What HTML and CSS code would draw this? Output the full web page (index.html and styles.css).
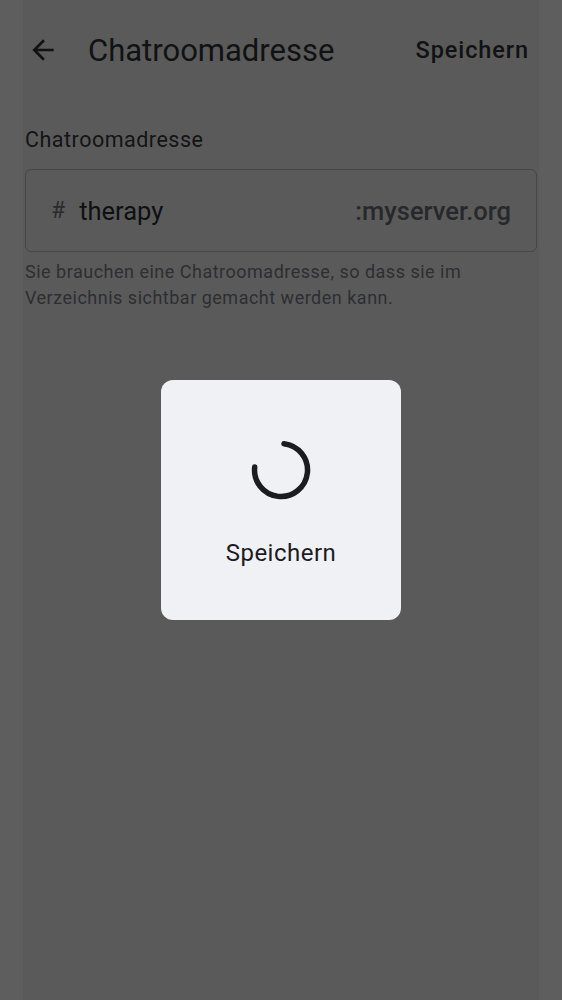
FILE: index.html
```html
<!DOCTYPE html>
<html lang="de">
<head>
<meta charset="utf-8">
<title>Chatroomadresse</title>
<link rel="stylesheet" href="styles.css">
</head>
<body>
<div class="screen">
  <header class="topbar">
    <button class="back" aria-label="Zurück">
      <svg width="32" height="32" viewBox="0 0 24 24"><path d="M20 11H7.83l5.59-5.59L12 4l-8 8 8 8 1.41-1.41L7.83 13H20v-2z" fill="#111214"/></svg>
    </button>
    <h1 class="title">Chatroomadresse</h1>
    <span class="save">Speichern</span>
  </header>
  <main class="content">
    <label class="label">Chatroomadresse</label>
    <div class="field">
      <span class="hash">#</span>
      <span class="value">therapy</span>
      <span class="suffix">:myserver.org</span>
    </div>
    <p class="helper">Sie brauchen eine Chatroomadresse, so dass sie im Verzeichnis sichtbar gemacht werden kann.</p>
  </main>
  <div class="dialog">
    <svg class="spinner" width="66" height="66" viewBox="0 0 66 66">
      <path d="M36 6.7 A26.5 26.5 0 1 1 6.7 30" fill="none" stroke="#1b1c1f" stroke-width="5.5" stroke-linecap="round"/>
    </svg>
    <div class="dialog-text">Speichern</div>
  </div>
</div>
</body>
</html>
```
FILE: styles.css
```css
html, body {
  margin: 0;
  padding: 0;
}
body {
  background: linear-gradient(to right, #5e5e5e 0, #5e5e5e 23px, #5a5a5a 23px, #5a5a5a 539px, #5e5e5e 539px);
  font-family: Roboto, "Liberation Sans", sans-serif;
  width: 562px;
  height: 1000px;
  overflow: hidden;
}
.screen {
  position: relative;
  height: 1000px;
}
.topbar {
  display: flex;
  align-items: center;
  height: 100px;
  padding: 0 33px 0 27px;
  box-sizing: border-box;
}
.back {
  background: none;
  border: 0;
  padding: 0;
  width: 32px;
  height: 32px;
  display: flex;
  align-items: center;
  justify-content: center;
  margin-right: 29px;
}
.title {
  margin: 0;
  font-size: 31px;
  font-weight: 400;
  color: #111214;
  flex: 1;
  letter-spacing: 0;
}
.save {
  font-size: 23.5px;
  color: #111214;
  font-weight: 500;
  letter-spacing: 0.9px;
}
.content {
  padding: 27px 25px 0 25px;
}
.label {
  display: block;
  font-size: 21.5px;
  color: #131416;
  letter-spacing: 0.5px;
  margin-bottom: 17px;
}
.field {
  display: flex;
  align-items: center;
  height: 83px;
  box-sizing: border-box;
  border: 1.5px solid #45464a;
  border-radius: 6px;
  padding: 0 25px 0 25px;
}
.hash {
  font-size: 23px;
  color: #2a2b2f;
  margin-right: 14px;
}
.value {
  font-size: 25.5px;
  color: #0f1012;
  flex: 1;
}
.suffix {
  font-size: 25.5px;
  font-weight: 500;
  color: #27282b;
}
.helper {
  margin: 7px 0 0 0;
  font-size: 18px;
  line-height: 26px;
  color: #2d2e32;
  letter-spacing: 0.5px;
}
.dialog {
  position: absolute;
  left: 161px;
  top: 380px;
  width: 240px;
  height: 240px;
  background: #f0f1f5;
  border-radius: 12px;
  display: flex;
  flex-direction: column;
  align-items: center;
}
.spinner {
  margin-top: 57px;
}
.dialog-text {
  margin-top: 36px;
  font-size: 24px;
  color: #1b1c1f;
  letter-spacing: 0.5px;
}
```
